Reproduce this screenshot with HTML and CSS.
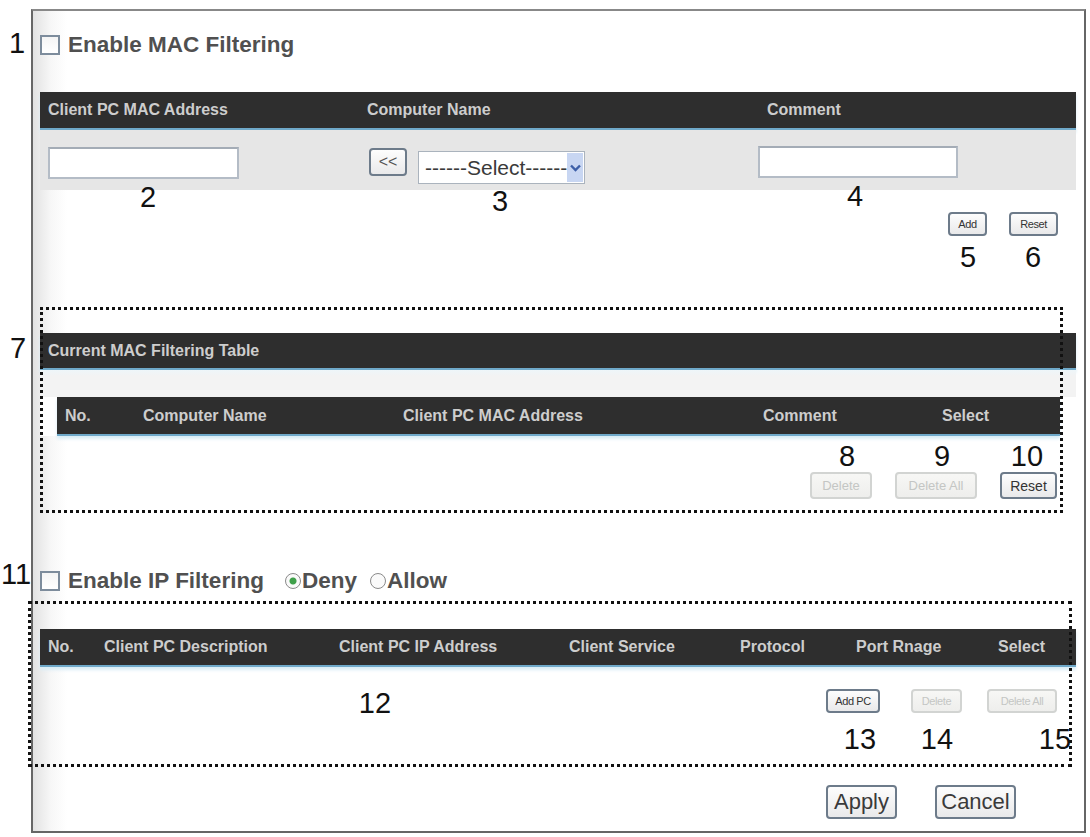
FILE: index.html
```html
<!DOCTYPE html>
<html lang="en">
  <head>
    <meta charset="UTF-8" />
    <meta name="viewport" content="width=device-width, initial-scale=1.0" />
    <title>MAC / IP Filtering</title>
    <link rel="stylesheet" href="styles.css">
  </head>
  <body>
    <div class="page">
      <div class="panel">
        <div class="enable enable-mac">
          <span class="check"></span>
          <span>Enable MAC Filtering</span>
        </div>

        <div class="bar cols-mac">
          <span>Client PC MAC Address</span>
          <span>Computer Name</span>
          <span>Comment</span>
        </div>
        <div class="entry">
          <div><input type="text" class="field field-mac" /></div>
          <div class="pick">
            <button class="btn btn-back">&lt;&lt;</button>
            <div class="select">
              <span class="select-text">------Select------</span>
              <span class="select-drop">
                <svg width="11" height="8" viewBox="0 0 11 8">
                  <path d="M1 1.5 L5.5 6 L10 1.5" fill="none" stroke="#3d5fa8" stroke-width="2.4" />
                </svg>
              </span>
            </div>
          </div>
          <div><input type="text" class="field field-comment" /></div>
        </div>
        <div class="actions actions-add">
          <button class="btn btn-sm btn-add">Add</button>
          <button class="btn btn-sm btn-reset">Reset</button>
        </div>

        <div class="bar bar-title">Current MAC Filtering Table</div>
        <div class="list-wrap">
          <div class="bar cols-list">
            <span>No.</span>
            <span>Computer Name</span>
            <span>Client PC MAC Address</span>
            <span>Comment</span>
            <span>Select</span>
          </div>
        </div>
        <div class="actions actions-list">
          <button class="btn btn-md btn-del" disabled>Delete</button>
          <button class="btn btn-md btn-delall" disabled>Delete All</button>
          <button class="btn btn-md btn-reset2">Reset</button>
        </div>

        <div class="enable enable-ip">
          <span class="check"></span>
          <span>Enable IP Filtering</span>
          <span class="radio on"></span><span class="radio-label">Deny</span>
          <span class="radio"></span><span class="radio-label">Allow</span>
        </div>
        <div class="bar cols-ip">
          <span>No.</span>
          <span>Client PC Description</span>
          <span>Client PC IP Address</span>
          <span>Client Service</span>
          <span>Protocol</span>
          <span>Port Rnage</span>
          <span>Select</span>
        </div>
        <div class="actions actions-ip">
          <button class="btn btn-sm btn-addpc">Add PC</button>
          <button class="btn btn-sm btn-ipdel" disabled>Delete</button>
          <button class="btn btn-sm btn-ipdelall" disabled>Delete All</button>
        </div>

        <div class="actions submit">
          <button class="btn btn-lg btn-apply">Apply</button>
          <button class="btn btn-lg btn-cancel">Cancel</button>
        </div>
      </div>

      <!-- callout frames and numbers -->
      <span class="dots dots-mac"></span>
      <span class="dots dots-ip"></span>
      <span class="num n1">1</span>
      <span class="num n2">2</span>
      <span class="num n3">3</span>
      <span class="num n4">4</span>
      <span class="num n5">5</span>
      <span class="num n6">6</span>
      <span class="num n7">7</span>
      <span class="num n8">8</span>
      <span class="num n9">9</span>
      <span class="num n10">10</span>
      <span class="num n11">11</span>
      <span class="num n12">12</span>
      <span class="num n13">13</span>
      <span class="num n14">14</span>
      <span class="num n15">15</span>
    </div>
  </body>
</html>
```

FILE: styles.css
```css
body {
  margin: 0;
  background: #fff;
  font-family: "Liberation Sans", Arial, sans-serif;
  color: #333;
}

.page {
  position: relative;
  padding: 9px 0 0 31px;
  width: 1059px;
  height: 828px;
}

.panel {
  box-sizing: border-box;
  width: 1055px;
  height: 824px;
  border: 2px solid #666;
  border-top-color: #888;
  padding: 22px 8px 0 7px;
  background: linear-gradient(to right, #e2e2e2, #f7f7f7 18px, #fff 34px);
}

/* checkbox rows */
.enable {
  display: flex;
  align-items: center;
  height: 24px;
  font-size: 22.5px;
  font-weight: bold;
  color: #505050;
}
.check {
  box-sizing: border-box;
  width: 20px;
  height: 20px;
  margin-right: 8px;
  border: 2px solid #7d8c9c;
  background: linear-gradient(#f4f4f4, #fff);
}
.radio {
  box-sizing: border-box;
  width: 16px;
  height: 16px;
  margin: 0 1px 0 0;
  border: 1.5px solid #8a8a8a;
  border-radius: 50%;
  background: #fafafa;
}
.radio.on {
  margin-left: 21px;
  background: radial-gradient(circle, #3fa04a 0, #3fa04a 3px, #fafafa 4px);
}
.radio-label + .radio {
  margin-left: 13px;
}

/* dark table headers */
.bar {
  box-sizing: border-box;
  height: 38px;
  background: #2e2e2e;
  border-bottom: 2px solid #6fa9c9;
  box-shadow: 0 3px 3px #d9edf6;
  color: #cdcdcd;
  font-size: 16px;
  font-weight: bold;
  align-items: center;
  padding-left: 8px;
}
.cols-mac {
  display: grid;
  grid-template-columns: 319px 400px 1fr;
  margin-top: 35px;
}
.bar-title {
  display: flex;
  height: 37px;
  margin-top: 97px;
}
.list-wrap {
  padding: 27px 16px 0 17px;
  background: linear-gradient(#eef6f9, #f3f3f3 6px, #f3f3f3 27px, #fff 27px);
}
.cols-list {
  display: grid;
  grid-template-columns: 78px 260px 360px 179px 1fr;
  height: 39px;
}
.cols-ip {
  display: grid;
  grid-template-columns: 56px 235px 230px 171px 116px 142px 1fr;
  margin-top: 36px;
}

/* entry row under the first header */
.entry {
  display: grid;
  grid-template-columns: 319px 400px 1fr;
  align-items: start;
  box-sizing: border-box;
  height: 60px;
  padding: 16px 0 0 8px;
  background: #e6e6e6;
}
.field {
  box-sizing: border-box;
  height: 32px;
  border: 2px solid #b4bcc6;
  border-top-color: #a4acb6;
  background: #fff;
  padding: 0;
}
.field-mac {
  width: 191px;
  margin-top: 1px;
}
.field-comment {
  width: 200px;
  margin-left: -9px;
}
.pick {
  display: flex;
  align-items: flex-start;
}
.select {
  box-sizing: border-box;
  display: flex;
  align-items: center;
  width: 167px;
  height: 33px;
  margin: 5px 0 0 11px;
  border: 1px solid #aab3bd;
  background: #fff;
  font-size: 21px;
  color: #3a3a3a;
}
.select-text {
  flex: 1;
  padding-left: 6px;
  white-space: nowrap;
}
.select-drop {
  display: flex;
  align-items: center;
  justify-content: center;
  width: 17px;
  height: 29px;
  margin-right: 1px;
  background: #c8d6f2;
}

/* buttons */
.btn {
  box-sizing: border-box;
  border: 2px solid #6d7b8a;
  border-radius: 4px;
  background: linear-gradient(#fdfdfd, #e9e9ea);
  color: #333;
  font-family: "Liberation Sans", Arial, sans-serif;
  padding: 0;
  white-space: nowrap;
}
.btn:disabled {
  border-color: #d2d4d2;
  background: linear-gradient(#f7f7f5, #eeeeec);
  color: #c4c6c4;
}
.btn-back {
  width: 38px;
  height: 28px;
  margin: 2px 0 0 2px;
  font-size: 16px;
  color: #555;
}
.btn-sm {
  height: 24px;
  font-size: 11px;
  letter-spacing: -0.4px;
}
.btn-md {
  height: 27px;
  font-size: 13px;
}
.btn-lg {
  height: 34px;
  font-size: 22px;
  color: #3a3a3a;
}

.actions {
  display: flex;
  justify-content: flex-end;
}
.actions-add {
  margin-top: 22px;
  padding-right: 18px;
}
.btn-add { width: 39px; }
.btn-reset { width: 49px; margin-left: 22px; }

.actions-list {
  margin-top: 36px;
  padding-right: 19px;
}
.btn-del { width: 62px; }
.btn-delall { width: 82px; margin-left: 23px; }
.btn-reset2 { width: 57px; margin-left: 23px; font-size: 14px; }

.enable-ip {
  margin-top: 70px;
}
.radio-label {
  font-size: 22.5px;
}

.actions-ip {
  margin-top: 22px;
  padding-right: 19px;
}
.btn-addpc { width: 54px; }
.btn-ipdel { width: 51px; margin-left: 31px; }
.btn-ipdelall { width: 70px; margin-left: 25px; }

.submit {
  margin-top: 72px;
  padding-right: 60px;
}
.btn-apply { width: 71px; }
.btn-cancel { width: 81px; margin-left: 38px; }

/* callouts */
.dots {
  position: absolute;
  box-sizing: border-box;
  border: 3px dotted #111;
}
.dots-mac {
  left: 40px;
  top: 307px;
  width: 1023px;
  height: 206px;
}
.dots-ip {
  left: 28px;
  top: 601px;
  width: 1044px;
  height: 166px;
}
.num {
  position: absolute;
  transform: translate(-50%, -50%);
  font-size: 29px;
  line-height: 1;
  color: #111;
}
.n1 { left: 17px; top: 43px; }
.n2 { left: 148px; top: 197px; }
.n3 { left: 500px; top: 201px; }
.n4 { left: 855px; top: 196px; }
.n5 { left: 968px; top: 257px; }
.n6 { left: 1033px; top: 257px; }
.n7 { left: 18px; top: 348px; }
.n8 { left: 847px; top: 456px; }
.n9 { left: 942px; top: 456px; }
.n10 { left: 1027px; top: 456px; }
.n11 { left: 16px; top: 574px; }
.n12 { left: 375px; top: 703px; }
.n13 { left: 860px; top: 739px; }
.n14 { left: 937px; top: 739px; }
.n15 { left: 1055px; top: 739px; }
```
